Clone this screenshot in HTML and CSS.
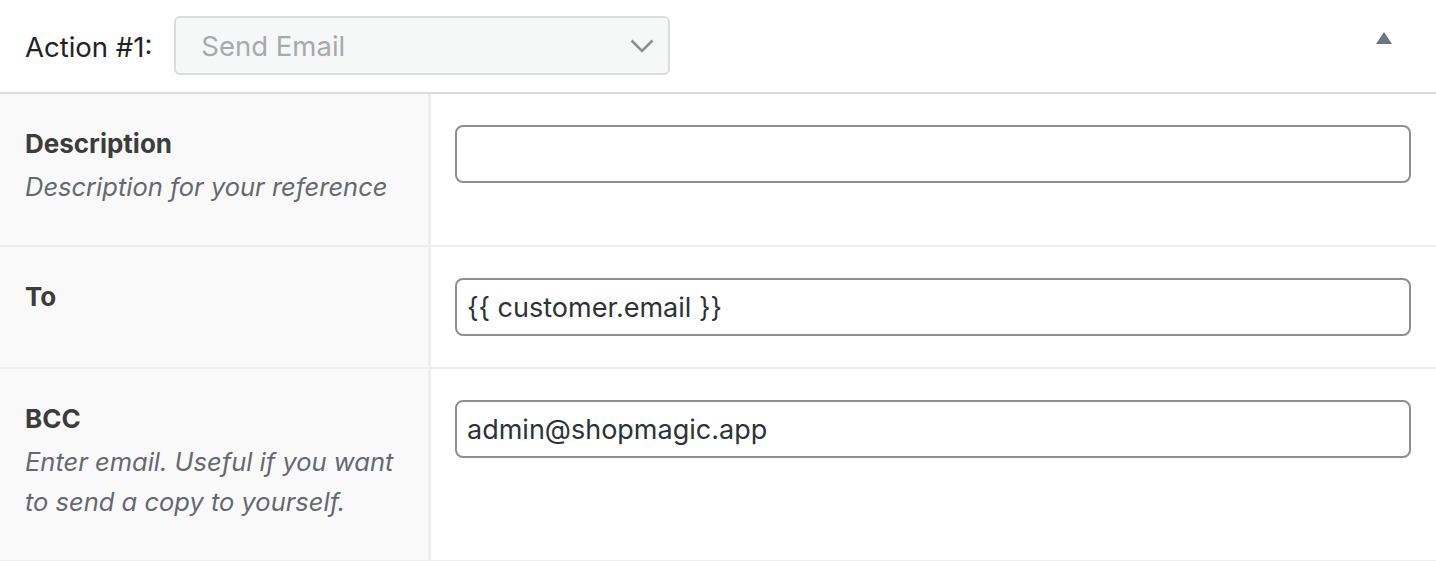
FILE: index.html
```html
<!DOCTYPE html>
<html>
<head>
<meta charset="utf-8">
<link rel="stylesheet" href="styles.css">
</head>
<body>
<div class="panel">
  <div class="header">
    <span class="action-label">Action #1:</span>
    <div class="select">
      <span class="select-text">Send Email</span>
      <svg class="chevron" width="24" height="14" viewBox="0 0 24 14"><path d="M1.5 1.5 L12 12 L22.5 1.5" fill="none" stroke="#8c8f94" stroke-width="2.6"/></svg>
    </div>
    <span class="toggle"></span>
  </div>
  <div class="row">
    <div class="label-cell">
      <div class="label">Description</div>
      <div class="desc">Description for your reference</div>
    </div>
    <div class="field-cell">
      <div class="input"></div>
    </div>
  </div>
  <div class="row">
    <div class="label-cell">
      <div class="label">To</div>
    </div>
    <div class="field-cell">
      <div class="input">{{ customer.email }}</div>
    </div>
  </div>
  <div class="row">
    <div class="label-cell">
      <div class="label">BCC</div>
      <div class="desc">Enter email. Useful if you want to send a copy to yourself.</div>
    </div>
    <div class="field-cell">
      <div class="input">admin@shopmagic.app</div>
    </div>
  </div>
</div>
</body>
</html>
```

FILE: styles.css
```css
html, body {
  margin: 0;
  padding: 0;
  background: #ffffff;
}
body {
  font-family: Inter, "Noto Sans", "Liberation Sans", sans-serif;
  color: #1d2327;
}
.panel {
  width: 1436px;
}
.header {
  height: 92px;
  border-bottom: 2px solid #dcdcde;
  display: flex;
  align-items: center;
  padding-left: 25px;
}
.action-label {
  font-size: 27.5px;
  color: #1d2327;
  margin-right: 22px;
  margin-top: 2px;
}
.select {
  width: 496px;
  height: 59px;
  box-sizing: border-box;
  border: 2px solid #dcdcde;
  border-radius: 6px;
  background: #f6f7f7;
  display: flex;
  align-items: center;
  padding: 0 14px 0 25px;
  margin-top: -1px;
}
.select-text {
  flex: 1;
  font-size: 27.5px;
  color: #a7aaad;
}
.chevron {
  display: block;
}
.toggle {
  margin-left: auto;
  margin-right: 44px;
  margin-top: -17px;
  width: 0;
  height: 0;
  border-left: 8px solid transparent;
  border-right: 8px solid transparent;
  border-bottom: 12px solid #6c7781;
}
.row {
  display: flex;
  border-bottom: 2px solid #eeeeee;
}
.row:last-child {
  border-bottom-width: 1px;
}
.label-cell {
  width: 431px;
  flex: none;
  background: #f9f9f9;
  border-right: 3px solid #eeeeee;
  padding: 31px 25px 38px 25px;
  box-sizing: border-box;
}
.label {
  font-size: 26px;
  font-weight: 700;
  line-height: 38px;
  color: #3c3c3c;
}
.desc {
  margin-top: 4px;
  font-size: 25.5px;
  font-style: italic;
  line-height: 40px;
  color: #646970;
}
.field-cell {
  flex: 1;
  padding: 31px 25px 31px 24px;
}
.input {
  height: 58px;
  box-sizing: border-box;
  border: 2px solid #8c8f94;
  border-radius: 8px;
  background: #fff;
  padding: 0 10px;
  display: flex;
  align-items: center;
  font-size: 27px;
  color: #2c3338;
}
```
